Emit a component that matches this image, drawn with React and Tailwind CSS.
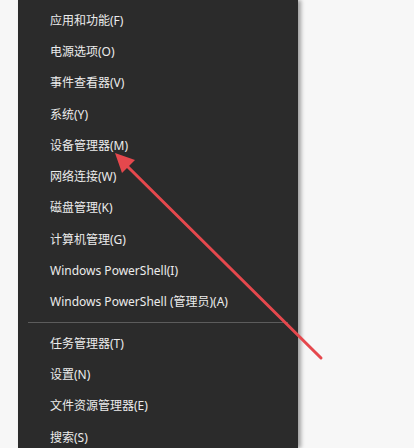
import React from 'react';

const topItems = [
  '应用和功能(F)',
  '电源选项(O)',
  '事件查看器(V)',
  '系统(Y)',
  '设备管理器(M)',
  '网络连接(W)',
  '磁盘管理(K)',
  '计算机管理(G)',
  'Windows PowerShell(I)',
  'Windows PowerShell (管理员)(A)',
];

const bottomItems = ['任务管理器(T)', '设置(N)', '文件资源管理器(E)', '搜索(S)'];

const MenuItem = ({ label }) => (
  <div className="h-[31.3px] flex items-center pl-[32px] text-[12px] text-[#ececec] whitespace-nowrap">
    {label}
  </div>
);

const App = () => {
  return (
    <div
      className="relative w-[414px] h-[448px] overflow-hidden bg-[#f7f7f7]"
      style={{ fontFamily: '"Noto Sans", "Noto Sans CJK SC", sans-serif' }}
    >
      <div className="ml-[18px] w-[280px] h-full bg-[#2b2b2b] pt-[5px] shadow-[3px_0_4px_rgba(0,0,0,0.35)]">
        {topItems.map((item) => (
          <MenuItem key={item} label={item} />
        ))}
        <div className="mx-[10px] my-[4.5px] h-px bg-[#5c5c5c]" />
        {bottomItems.map((item) => (
          <MenuItem key={item} label={item} />
        ))}
      </div>

      <svg className="absolute inset-0 pointer-events-none" width="414" height="448" viewBox="0 0 414 448">
        <line x1="321" y1="358" x2="126" y2="165" stroke="#e5484d" strokeWidth="3" strokeLinecap="round" />
        <polygon points="115,153 135,160 122,173" fill="#e5484d" />
      </svg>
    </div>
  );
};

export default App;
